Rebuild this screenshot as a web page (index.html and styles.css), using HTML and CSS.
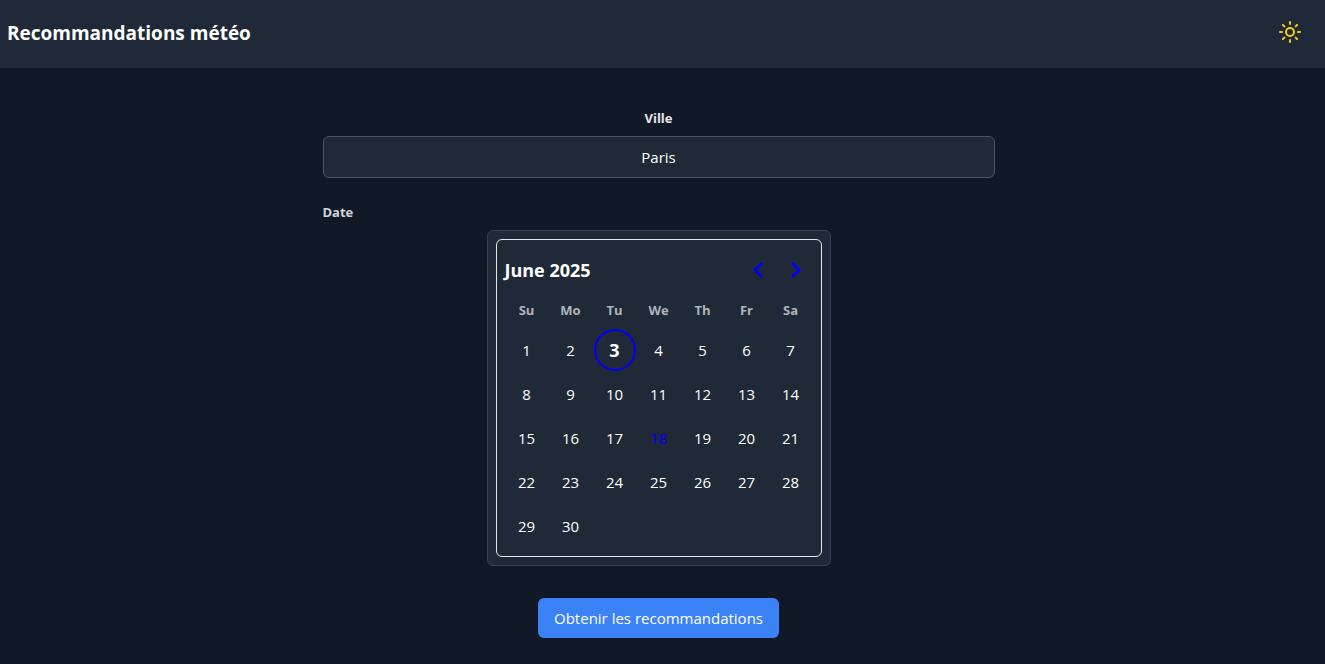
FILE: index.html
```html
<!DOCTYPE html>
<html lang="fr">
<head>
<meta charset="utf-8">
<meta name="viewport" content="width=device-width, initial-scale=1">
<title>Recommandations météo</title>
<link rel="stylesheet" href="styles.css">
</head>
<body>
<header class="topbar">
  <h1 class="topbar-title">Recommandations météo</h1>
  <button class="theme-toggle" type="button" aria-label="Changer de thème">
    <svg width="24" height="24" viewBox="0 0 24 24" fill="none" stroke="currentColor" stroke-width="2" stroke-linecap="round" stroke-linejoin="round" aria-hidden="true">
      <circle cx="12" cy="12" r="4"/>
      <path d="M12 2v2M12 20v2M4.93 4.93l1.41 1.41M17.66 17.66l1.41 1.41M2 12h2M20 12h2M6.34 17.66l-1.41 1.41M19.07 4.93l-1.41 1.41"/>
    </svg>
  </button>
</header>
<main class="page">
  <form class="form">
    <div class="field">
      <label class="label label-city" for="city">Ville</label>
      <input class="city" id="city" type="text" value="Paris">
    </div>
    <div class="field field-date">
      <span class="label" id="date-label">Date</span>
      <div class="picker" role="group" aria-labelledby="date-label">
        <div class="calendar">
          <div class="calendar-head">
            <span class="month" id="month">June 2025</span>
            <button class="nav" type="button" aria-label="Previous month">
              <svg width="24" height="24" viewBox="0 0 24 24" fill="currentColor" aria-hidden="true"><polygon points="16 18.112 9.812 12 16 5.877 14.094 4 6 12 14.094 20"/></svg>
            </button>
            <button class="nav" type="button" aria-label="Next month">
              <svg width="24" height="24" viewBox="0 0 24 24" fill="currentColor" aria-hidden="true"><polygon points="8 18.112 14.189 12 8 5.877 9.911 4 18 12 9.911 20"/></svg>
            </button>
          </div>
          <table class="days" aria-labelledby="month">
            <thead>
              <tr><th scope="col">Su</th><th scope="col">Mo</th><th scope="col">Tu</th><th scope="col">We</th><th scope="col">Th</th><th scope="col">Fr</th><th scope="col">Sa</th></tr>
            </thead>
            <tbody>
              <tr><td><button class="day" type="button">1</button></td><td><button class="day" type="button">2</button></td><td><button class="day selected" type="button" aria-pressed="true">3</button></td><td><button class="day" type="button">4</button></td><td><button class="day" type="button">5</button></td><td><button class="day" type="button">6</button></td><td><button class="day" type="button">7</button></td></tr>
              <tr><td><button class="day" type="button">8</button></td><td><button class="day" type="button">9</button></td><td><button class="day" type="button">10</button></td><td><button class="day" type="button">11</button></td><td><button class="day" type="button">12</button></td><td><button class="day" type="button">13</button></td><td><button class="day" type="button">14</button></td></tr>
              <tr><td><button class="day" type="button">15</button></td><td><button class="day" type="button">16</button></td><td><button class="day" type="button">17</button></td><td><button class="day today" type="button" aria-current="date">18</button></td><td><button class="day" type="button">19</button></td><td><button class="day" type="button">20</button></td><td><button class="day" type="button">21</button></td></tr>
              <tr><td><button class="day" type="button">22</button></td><td><button class="day" type="button">23</button></td><td><button class="day" type="button">24</button></td><td><button class="day" type="button">25</button></td><td><button class="day" type="button">26</button></td><td><button class="day" type="button">27</button></td><td><button class="day" type="button">28</button></td></tr>
              <tr><td><button class="day" type="button">29</button></td><td><button class="day" type="button">30</button></td><td></td><td></td><td></td><td></td><td></td></tr>
            </tbody>
          </table>
        </div>
      </div>
    </div>
    <button class="submit" type="submit">Obtenir les recommandations</button>
  </form>
</main>
</body>
</html>
```

FILE: styles.css
```css
* {
  box-sizing: border-box;
}

body {
  margin: 0;
  background: #111827;
  color: #ffffff;
  font-family: "Segoe UI", "Open Sans", "Noto Sans", sans-serif;
  font-size: 15px;
  line-height: 24px;
}

button,
input {
  font: inherit;
  color: inherit;
}

button {
  padding: 0;
  border: 0;
  background: none;
  cursor: pointer;
}

svg {
  display: block;
}

.topbar {
  display: flex;
  align-items: center;
  justify-content: space-between;
  padding: 12px 15px 16px 7px;
  background: #1f2937;
}

.topbar-title {
  margin: 0;
  padding-top: 2px;
  font-size: 19px;
  line-height: 28px;
  font-weight: 700;
}

.theme-toggle {
  padding: 8px;
  color: #facc15;
}

.page {
  padding: 40px 8px 24px 0;
}

.form {
  display: flex;
  flex-direction: column;
  align-items: center;
  max-width: 672px;
  margin: 0 auto;
}

.field {
  display: flex;
  flex-direction: column;
  width: 100%;
}

.field-date {
  margin-top: 24px;
}

.label {
  margin-bottom: 8px;
  color: #d1d5db;
  font-size: 13px;
  line-height: 20px;
  font-weight: 700;
}

.label-city {
  color: #e5e7eb;
  text-align: center;
}

.city {
  width: 100%;
  height: 42px;
  padding: 8px 16px;
  border: 1px solid #4b5563;
  border-radius: 6px;
  background: #1f2937;
  text-align: center;
}

.picker {
  align-self: center;
  padding: 8px;
  border: 1px solid #374151;
  border-radius: 6px;
  background: #1f2937;
}

.calendar {
  padding: 8px;
  border: 1px solid #e5e7eb;
  border-radius: 6px;
}

.calendar-head {
  display: flex;
  align-items: center;
  height: 44px;
}

.month {
  flex: 1;
  font-size: 18px;
  font-weight: 700;
}

.nav {
  display: grid;
  place-items: center;
  width: 36px;
  height: 44px;
  color: #0000ff;
}

.days {
  border-collapse: collapse;
}

.days th {
  width: 44px;
  height: 36px;
  padding: 0;
  color: #b0b4ba;
  font-size: 13px;
  font-weight: 700;
}

.days td {
  width: 44px;
  height: 44px;
  padding: 0;
}

.day {
  display: block;
  width: 42px;
  height: 42px;
  margin: 0 auto;
  border: 2px solid transparent;
  border-radius: 50%;
}

.selected {
  border-color: #0000ff;
  font-size: 18px;
  font-weight: 700;
}

.today {
  color: #0000ff;
}

.submit {
  margin-top: 32px;
  padding: 8px 16px;
  border-radius: 6px;
  background: #3b82f6;
}
```
